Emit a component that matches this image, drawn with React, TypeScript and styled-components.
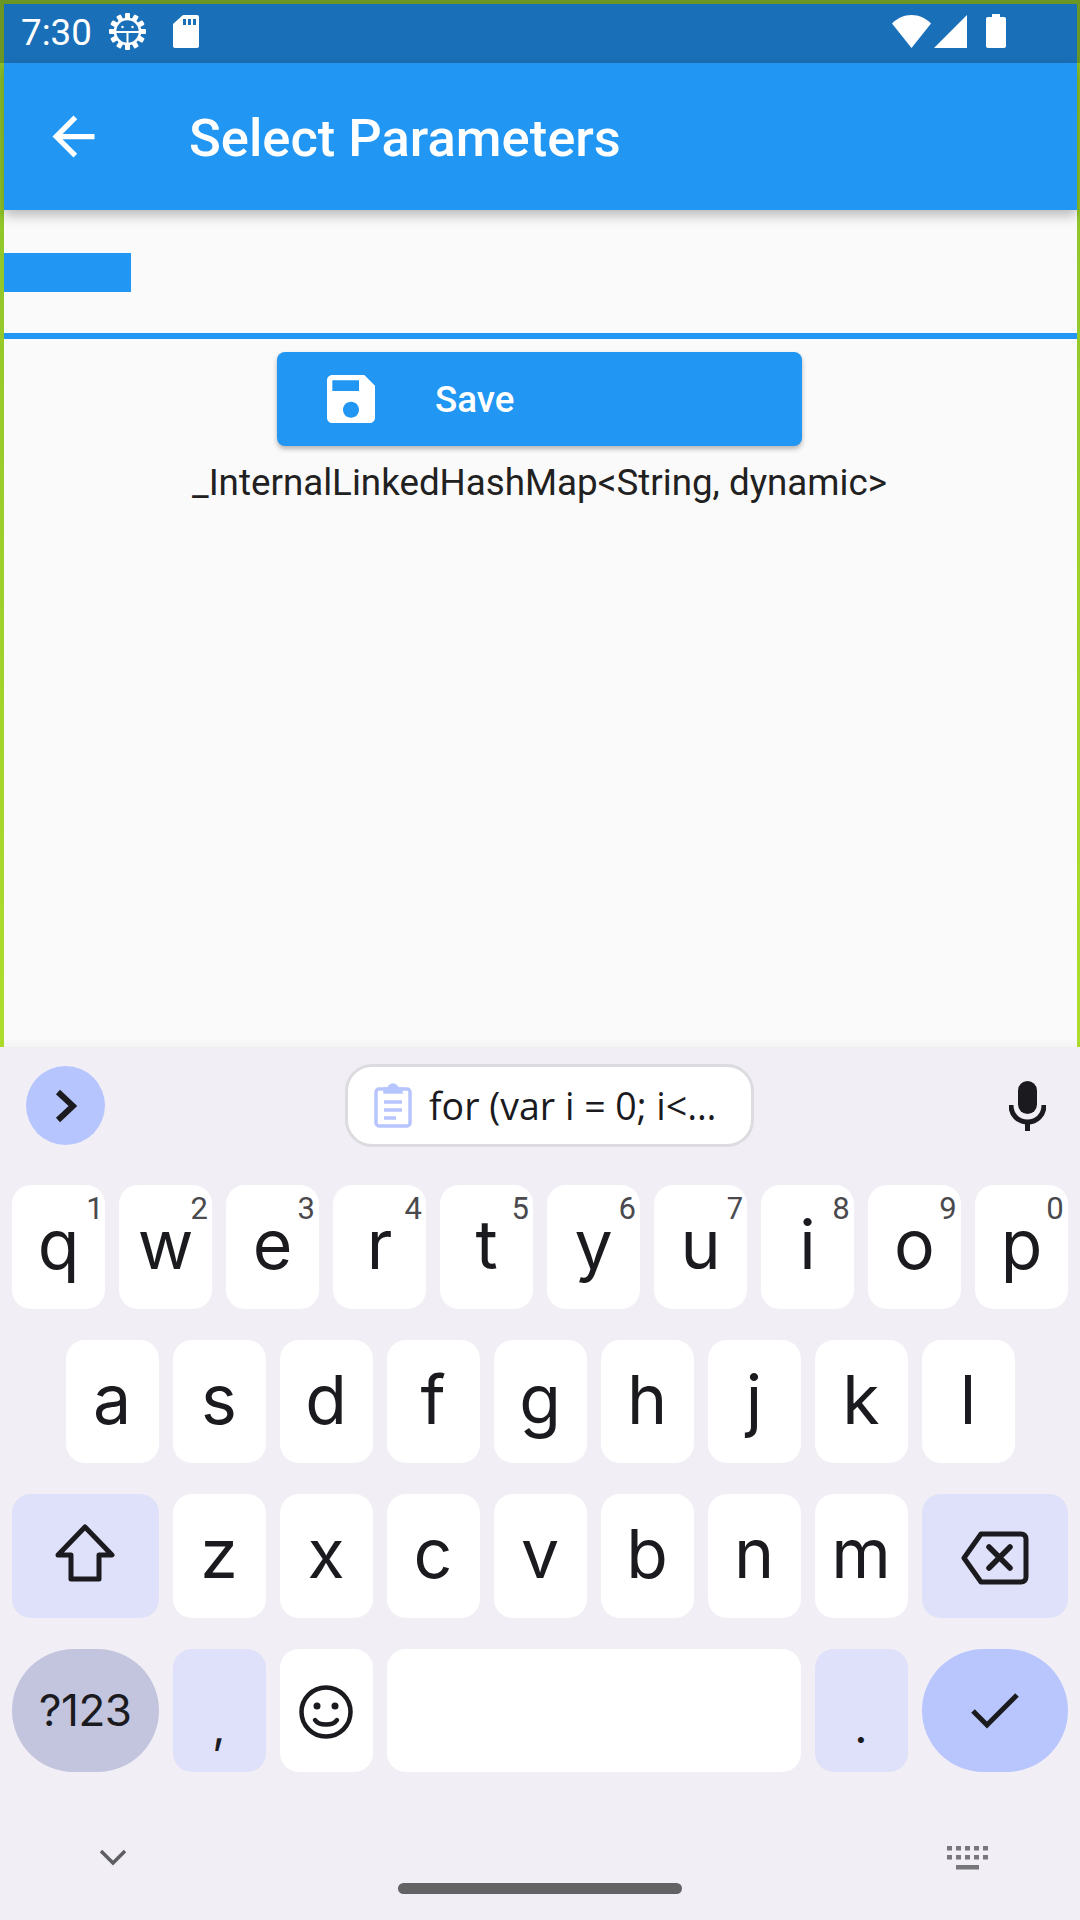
import React from "react";
import styled, { createGlobalStyle } from "styled-components";

const GlobalStyle = createGlobalStyle`
	html, body {
		margin: 0;
		padding: 0;
		background: #f1eff5;
	}
`;

const Phone = styled.div`
	width: 1080px;
	height: 1920px;
	display: flex;
	flex-direction: column;
	overflow: hidden;
	font-family: Roboto, "Liberation Sans", sans-serif;
`;

// The lime frame around the app is darkened by the status bar in the top 63px
const AppFrame = styled.div`
	flex: 1;
	min-height: 0;
	display: flex;
	flex-direction: column;
	padding: 4px 3px 0 4px;
	background: linear-gradient(180deg, #6a9625 0, #6a9625 63px, #8cc22a 63px, #aedd2c 100%);
`;

const StatusBar = styled.div`
	height: 59px;
	display: flex;
	align-items: center;
	background-color: #1a70b8;
	color: #fff;
	padding: 0 71px 0 17px;
	flex-shrink: 0;
`;

const StatusTime = styled.span`
	font-size: 36.75px;
	line-height: 1;
	width: 88px;
`;

const StatusIcon = styled.svg<{ $left?: number }>`
	display: block;
	margin-left: ${(props) => props.$left ?? 0}px;
	margin-top: -5px;
	flex-shrink: 0;
`;

const StatusSpacer = styled.div`
	flex: 1;
`;

const AppBar = styled.div`
	height: 147px;
	display: flex;
	align-items: center;
	background-color: #2196f3;
	color: #fff;
	padding-left: 38px;
	box-shadow: 0 5px 12px rgba(0, 0, 0, 0.28);
	position: relative;
	flex-shrink: 0;
`;

const BackIcon = styled.svg`
	display: block;
	margin-right: 84px;
`;

const Title = styled.h1`
	margin: 4px 0 0;
	font-size: 52.5px;
	font-weight: 500;
	line-height: 1;
`;

const Content = styled.div`
	flex: 1;
	display: flex;
	flex-direction: column;
	align-items: center;
	background-color: #fafafa;
`;

const FieldArea = styled.div`
	align-self: stretch;
	height: 129px;
	padding-top: 43px;
	box-sizing: border-box;
	border-bottom: 6px solid #2196f3;
`;

const SelectionMark = styled.div`
	width: 127px;
	height: 39px;
	background-color: #2196f3;
`;

const SaveButton = styled.button`
	width: 525px;
	height: 94px;
	margin: 13px 2px 0 0;
	padding: 0 0 0 42px;
	display: flex;
	align-items: center;
	border: none;
	border-radius: 8px;
	background-color: #2196f3;
	color: #fff;
	font-family: inherit;
	font-size: 36.75px;
	font-weight: 500;
	box-shadow: 0 3px 5px rgba(0, 0, 0, 0.28);
`;

const SaveLabel = styled.span`
	margin-left: 52px;
`;

const MapText = styled.div`
	margin: 12px 2px 0 0;
	font-size: 36.75px;
	line-height: 50px;
	color: #212121;
`;

const Keyboard = styled.div`
	height: 873px;
	flex-shrink: 0;
	display: flex;
	flex-direction: column;
	background-color: #f1eff5;
	box-shadow: 0 -4px 8px rgba(0, 0, 0, 0.03);
	position: relative;
`;

const SuggestionStrip = styled.div`
	height: 138px;
	display: flex;
	align-items: center;
	padding: 0 34px 0 26px;
	box-sizing: border-box;
	flex-shrink: 0;
`;

const ExpandButton = styled.div`
	width: 79px;
	height: 79px;
	border-radius: 50%;
	background-color: #b7c5fe;
	display: flex;
	align-items: center;
	justify-content: center;
	margin-right: 240px;
	margin-top: -21px;
`;

const ClipChip = styled.div`
	width: 409px;
	height: 83px;
	box-sizing: border-box;
	border: 3px solid #dcdbdf;
	border-radius: 27px;
	background-color: #fff;
	display: flex;
	align-items: center;
	padding-left: 26px;
	margin-top: -21px;
	color: #1b1b1f;
	font-family: "Open Sans", Roboto, sans-serif;
	font-size: 37.5px;
	white-space: nowrap;
`;

const ClipText = styled.span`
	margin-left: 17px;
`;

const MicIcon = styled.svg`
	display: block;
	margin-left: auto;
	margin-top: -21px;
`;

const KeyRows = styled.div`
	display: flex;
	flex-direction: column;
	gap: 31px;
`;

const KeyRow = styled.div`
	display: flex;
	justify-content: center;
	gap: 14px;
`;

const Key = styled.div<{ $tone?: "plain" | "soft" | "muted" | "accent"; $width?: number; $round?: boolean }>`
	position: relative;
	width: ${(props) => props.$width ?? 93}px;
	height: 123.5px;
	flex-shrink: 0;
	box-sizing: border-box;
	border-radius: ${(props) => (props.$round ? "62px" : "19px")};
	background-color: ${(props) => {
		if (props.$tone === "soft") return "#dfe0f9";
		if (props.$tone === "muted") return "#c3c5de";
		if (props.$tone === "accent") return "#b8c6fd";
		return "#fff";
	}};
	color: #1b1b1f;
	display: flex;
	justify-content: center;
	align-items: center;
	font-family: Inter, Roboto, sans-serif;
	font-size: 68px;
	line-height: 1;
`;

const KeyLetter = styled.span`
	display: block;
	margin-top: -5px;
`;

const KeyGlyph = styled.svg<{ $nudge?: number }>`
	display: block;
	margin-top: ${(props) => props.$nudge ?? 0}px;
`;

const PunctuationMark = styled.span`
	display: block;
	font-size: 46px;
	margin-top: 32px;
`;

const SymbolsLabel = styled.span`
	font-size: 44px;
	letter-spacing: -0.5px;
`;

const KeyHint = styled.span`
	position: absolute;
	top: 9px;
	right: 4px;
	font-family: Roboto, sans-serif;
	font-size: 31px;
	line-height: 30px;
	font-variant-numeric: proportional-nums;
	color: #4a4a4e;
`;

const BottomBar = styled.div`
	flex: 1;
	position: relative;
	display: flex;
	justify-content: space-between;
	padding: 0 92px 0 100px;
`;

const HideIcon = styled.svg`
	display: block;
	margin-top: 77px;
`;

const KeyboardIcon = styled.svg`
	display: block;
	margin-top: 74px;
`;

const GesturePill = styled.div`
	position: absolute;
	left: 398px;
	bottom: 26px;
	width: 284px;
	height: 11px;
	border-radius: 6px;
	background-color: #636366;
`;

const GearIcon = () => (
	<StatusIcon width="37" height="37" viewBox="0 0 37 37" $left={0}>
		{Array.from({ length: 12 }).map((_, i) => (
			<rect key={i} x="16" y="0" width="5" height="6" rx="1" fill="#fff" transform={`rotate(${i * 30} 18.5 18.5)`} />
		))}
		<circle cx="18.5" cy="18.5" r="12.5" fill="none" stroke="#fff" strokeWidth="2.6" />
		<path d="M6 19H31M18.5 19V31" stroke="#fff" strokeWidth="2" />
		<circle cx="13.5" cy="14" r="1.2" fill="#fff" />
		<circle cx="23.5" cy="14" r="1.2" fill="#fff" />
	</StatusIcon>
);

const SdCardIcon = () => (
	<StatusIcon width="26" height="33" viewBox="0 0 26 33" $left={27}>
		<path
			fillRule="evenodd"
			fill="#fff"
			d="M10 0H24C25.2 0 26 .8 26 2V31C26 32.2 25.2 33 24 33H2C.8 33 0 32.2 0 31V9ZM10 4V10H13V4ZM15 4V10H18V4ZM20 4V10H23V4Z"
		/>
	</StatusIcon>
);

const BackspaceGlyph = () => (
	<KeyGlyph $nudge={5} width="68" height="56" viewBox="0 0 68 56" fill="none" stroke="#1b1b1f" strokeWidth="5" strokeLinejoin="round" strokeLinecap="round">
		<path d="M20 4H60C63 4 65 6 65 9V47C65 50 63 52 60 52H20L3 28Z" />
		<path d="M28 17L49 38M49 17L28 38" strokeWidth="5.5" />
	</KeyGlyph>
);

const topRow = [
	["q", "1"],
	["w", "2"],
	["e", "3"],
	["r", "4"],
	["t", "5"],
	["y", "6"],
	["u", "7"],
	["i", "8"],
	["o", "9"],
	["p", "0"],
];

const App: React.FC = () => {
	return (
		<Phone>
			<GlobalStyle />
			<AppFrame>
				<StatusBar>
					<StatusTime>7:30</StatusTime>
					<GearIcon />
					<SdCardIcon />
					<StatusSpacer />
					<StatusIcon width="39" height="33" viewBox="0 0 39 33" $left={0}>
						<path fill="#fff" d="M19.5 0C27 0 33.8 3 39 8.6L19.5 33 0 8.6C5.2 3 12 0 19.5 0Z" />
					</StatusIcon>
					<StatusIcon width="33" height="33" viewBox="0 0 33 33" $left={3}>
						<path fill="#fff" d="M33 0V33H0Z" />
					</StatusIcon>
					<StatusIcon width="20" height="34" viewBox="0 0 20 34" $left={19}>
						<path fill="#fff" d="M6 0H14V3H18C19.2 3 20 3.8 20 5V32C20 33.2 19.2 34 18 34H2C.8 34 0 33.2 0 32V5C0 3.8.8 3 2 3H6Z" />
					</StatusIcon>
				</StatusBar>
				<AppBar>
					<BackIcon width="63" height="63" viewBox="0 0 24 24">
						<path fill="#fff" d="M20 11H7.83l5.59-5.59L12 4l-8 8 8 8 1.41-1.41L7.83 13H20z" />
					</BackIcon>
					<Title>Select Parameters</Title>
				</AppBar>
				<Content>
					<FieldArea>
						<SelectionMark />
					</FieldArea>
					<SaveButton>
						<svg width="64" height="64" viewBox="0 0 24 24">
							<path
								fill="#fff"
								d="M17 3H5c-1.11 0-2 .9-2 2v14c0 1.1.89 2 2 2h14c1.1 0 2-.9 2-2V7l-4-4zm-5 16c-1.66 0-3-1.34-3-3s1.34-3 3-3 3 1.34 3 3-1.34 3-3 3zm3-10H5V5h10v4z"
							/>
						</svg>
						<SaveLabel>Save</SaveLabel>
					</SaveButton>
					<MapText>{"_InternalLinkedHashMap<String, dynamic>"}</MapText>
				</Content>
			</AppFrame>
			<Keyboard>
				<SuggestionStrip>
					<ExpandButton>
						<svg width="22" height="34" viewBox="0 0 22 34" fill="none" stroke="#1b1b1f" strokeWidth="6">
							<path d="M3 3L18 17L3 31" />
						</svg>
					</ExpandButton>
					<ClipChip>
						<svg width="38" height="45" viewBox="0 0 38 45" fill="none" stroke="#b7c5fe" strokeWidth="3.5">
							<rect x="2" y="6" width="34" height="37" rx="3" />
							<path d="M11 6H15C15 3.5 17 2 19 2S23 3.5 23 6H27V9H11Z" fill="#b7c5fe" />
							<path d="M10 19H28M10 27H28M10 35H22" strokeWidth="3.5" />
						</svg>
						<ClipText>{"for (var i = 0; i<…"}</ClipText>
					</ClipChip>
					<MicIcon width="37" height="50" viewBox="0 0 37 50">
						<rect x="9" y="0" width="19" height="33" rx="9.5" fill="#1b1b1f" />
						<path d="M2 24C2 34 9 41 18.5 41S35 34 35 24" fill="none" stroke="#1b1b1f" strokeWidth="5" />
						<rect x="16" y="40" width="5" height="10" fill="#1b1b1f" />
					</MicIcon>
				</SuggestionStrip>
				<KeyRows>
					<KeyRow>
						{topRow.map(([letter, hint]) => (
							<Key key={letter}>
								<KeyLetter>{letter}</KeyLetter>
								<KeyHint>{hint}</KeyHint>
							</Key>
						))}
					</KeyRow>
					<KeyRow>
						{"asdfghjkl".split("").map((letter) => (
							<Key key={letter}>
								<KeyLetter>{letter}</KeyLetter>
							</Key>
						))}
					</KeyRow>
					<KeyRow>
						<Key $tone="soft" $width={146.5}>
							<KeyGlyph $nudge={-6} width="60" height="58" viewBox="0 0 60 58" fill="none" stroke="#1b1b1f" strokeWidth="5" strokeLinejoin="round">
								<path d="M30 3L57 31H44V55H16V31H3Z" />
							</KeyGlyph>
						</Key>
						{"zxcvbnm".split("").map((letter) => (
							<Key key={letter}>
								<KeyLetter>{letter}</KeyLetter>
							</Key>
						))}
						<Key $tone="soft" $width={146.5}>
							<BackspaceGlyph />
						</Key>
					</KeyRow>
					<KeyRow>
						<Key $tone="muted" $width={146.5} $round>
							<SymbolsLabel>?123</SymbolsLabel>
						</Key>
						<Key $tone="soft">
							<PunctuationMark>,</PunctuationMark>
						</Key>
						<Key>
							<KeyGlyph $nudge={4} width="54" height="54" viewBox="0 0 54 54" fill="none" stroke="#1b1b1f" strokeWidth="4.5">
								<circle cx="27" cy="27" r="24.5" />
								<circle cx="18" cy="21" r="3.5" fill="#1b1b1f" stroke="none" />
								<circle cx="36" cy="21" r="3.5" fill="#1b1b1f" stroke="none" />
								<path d="M16 35C20 41 34 41 38 35" strokeLinecap="round" />
							</KeyGlyph>
						</Key>
						<Key $width={414} />
						<Key $tone="soft">
							<PunctuationMark>.</PunctuationMark>
						</Key>
						<Key $tone="accent" $width={146.5} $round>
							<KeyGlyph $nudge={2} width="48" height="38" viewBox="0 0 48 38" fill="none" stroke="#1b1b1f" strokeWidth="5">
								<path d="M2 19L16 33L46 3" />
							</KeyGlyph>
						</Key>
					</KeyRow>
				</KeyRows>
				<BottomBar>
					<HideIcon width="26" height="17" viewBox="0 0 26 17" fill="none" stroke="#5f5f63" strokeWidth="3.5">
						<path d="M1 2L13 14L25 2" />
					</HideIcon>
					<KeyboardIcon width="41" height="24" viewBox="0 0 41 24" fill="#77777b">
						{[0, 9, 18, 27, 36].map((x) => (
							<React.Fragment key={x}>
								<rect x={x} y="0" width="5" height="4.5" />
								<rect x={x} y="9" width="5" height="4.5" />
							</React.Fragment>
						))}
						<rect x="9" y="19" width="23" height="4.5" />
					</KeyboardIcon>
					<GesturePill />
				</BottomBar>
			</Keyboard>
		</Phone>
	);
};

export default App;
